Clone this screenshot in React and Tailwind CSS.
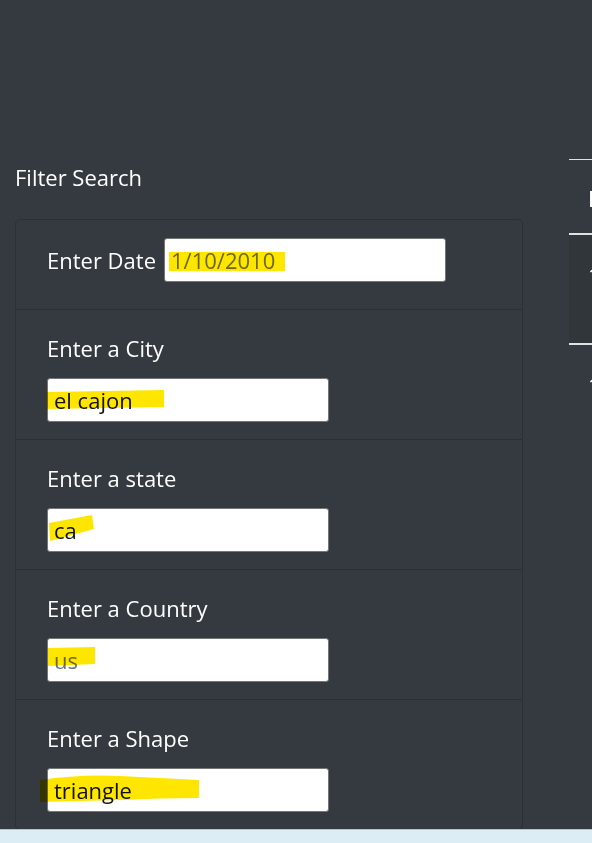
import React from "react";

const font = { fontFamily: '"Open Sans", "Noto Sans", sans-serif' };

function Field({ value, grey, children }) {
  return (
    <div className="relative w-[282px] h-[44px]">
      <input
        readOnly
        value={value}
        className={`w-full h-full bg-white border border-[#767676] rounded-[3px] pl-[6px] text-[22px] outline-none ${grey ? "text-[#6c757d]" : "text-[#111]"}`}
        style={font}
      />
      {children}
    </div>
  );
}

function Mark({ d, w = 300, h = 60, className = "" }) {
  return (
    <svg
      className={`absolute pointer-events-none mix-blend-multiply ${className}`}
      width={w}
      height={h}
      viewBox={`0 0 ${w} ${h}`}
    >
      <path d={d} fill="#ffe600" />
    </svg>
  );
}

export default function App() {
  return (
    <div className="w-[592px] h-[843px] overflow-hidden bg-[#dcedf6]" style={font}>
      <div className="h-[829px] bg-[#343a40] overflow-hidden flex">
        {/* left column */}
        <div className="pl-[15px] pt-[159px] w-[523px] shrink-0">
          <div className="text-white text-[22px] leading-[36px] mb-[24px]">Filter Search</div>
          <div className="border border-[#2b3035] rounded-[5px]">
            {/* date row */}
            <div className="flex items-center pl-[31px] pt-[18px] pb-[27px]">
              <span className="text-white text-[22px] leading-[36px] mr-[8px]">Enter Date</span>
              <Field value="1/10/2010" grey>
                <Mark className="left-[5px] top-[14px]" w={120} h={20} d="M0 0 H116 V19 H0 Z" />
              </Field>
            </div>
            {[
              { label: "Enter a City", value: "el cajon", mark: <Mark className="left-[-1px] top-[12px]" w={120} h={20} d="M1 2 L118 0 L118 17 L60 18 L1 19 Z" /> },
              { label: "Enter a state", value: "ca", mark: <Mark className="left-[1px] top-[7px]" w={50} h={28} d="M1 8 L44 0 L46 14 L2 26 Z" /> },
              { label: "Enter a Country", value: "us", grey: true, mark: <Mark className="left-[1px] top-[9px]" w={50} h={20} d="M0 1 L47 0 L47 17 L0 19 Z" /> },
              { label: "Enter a Shape", value: "triangle", mark: <Mark className="left-[-7px] top-[4px]" w={162} h={32} d="M0 8 Q40 2 80 4 Q120 6 159 8 L159 26 Q120 26 80 28 L0 30 Z" /> },
            ].map((r, i) => (
              <div key={i} className="border-t border-[#2b3035] pl-[31px] pt-[20px] pb-[17px]">
                <div className="text-white text-[22px] leading-[36px] mb-[12px]">{r.label}</div>
                <Field value={r.value} grey={r.grey}>{r.mark}</Field>
              </div>
            ))}
          </div>
        </div>
        {/* right table */}
        <div className="ml-[46px] pt-[159px] shrink-0 w-[400px]">
          <div className="border-t border-[#dee2e6] h-[74px] pl-[19px] pt-[20px] text-white text-[22px] leading-[36px] font-semibold">Date</div>
          <div className="border-t-2 border-[#dee2e6] h-[110px] bg-[#31363b] pl-[19px] pt-[22px] text-white text-[22px] leading-[36px]">1/10/2010</div>
          <div className="border-t-2 border-[#dee2e6] h-[110px] pl-[19px] pt-[22px] text-white text-[22px] leading-[36px]">1/10/2010</div>
        </div>
      </div>
      <div className="h-px bg-[#b7c3ca]" />
    </div>
  );
}
